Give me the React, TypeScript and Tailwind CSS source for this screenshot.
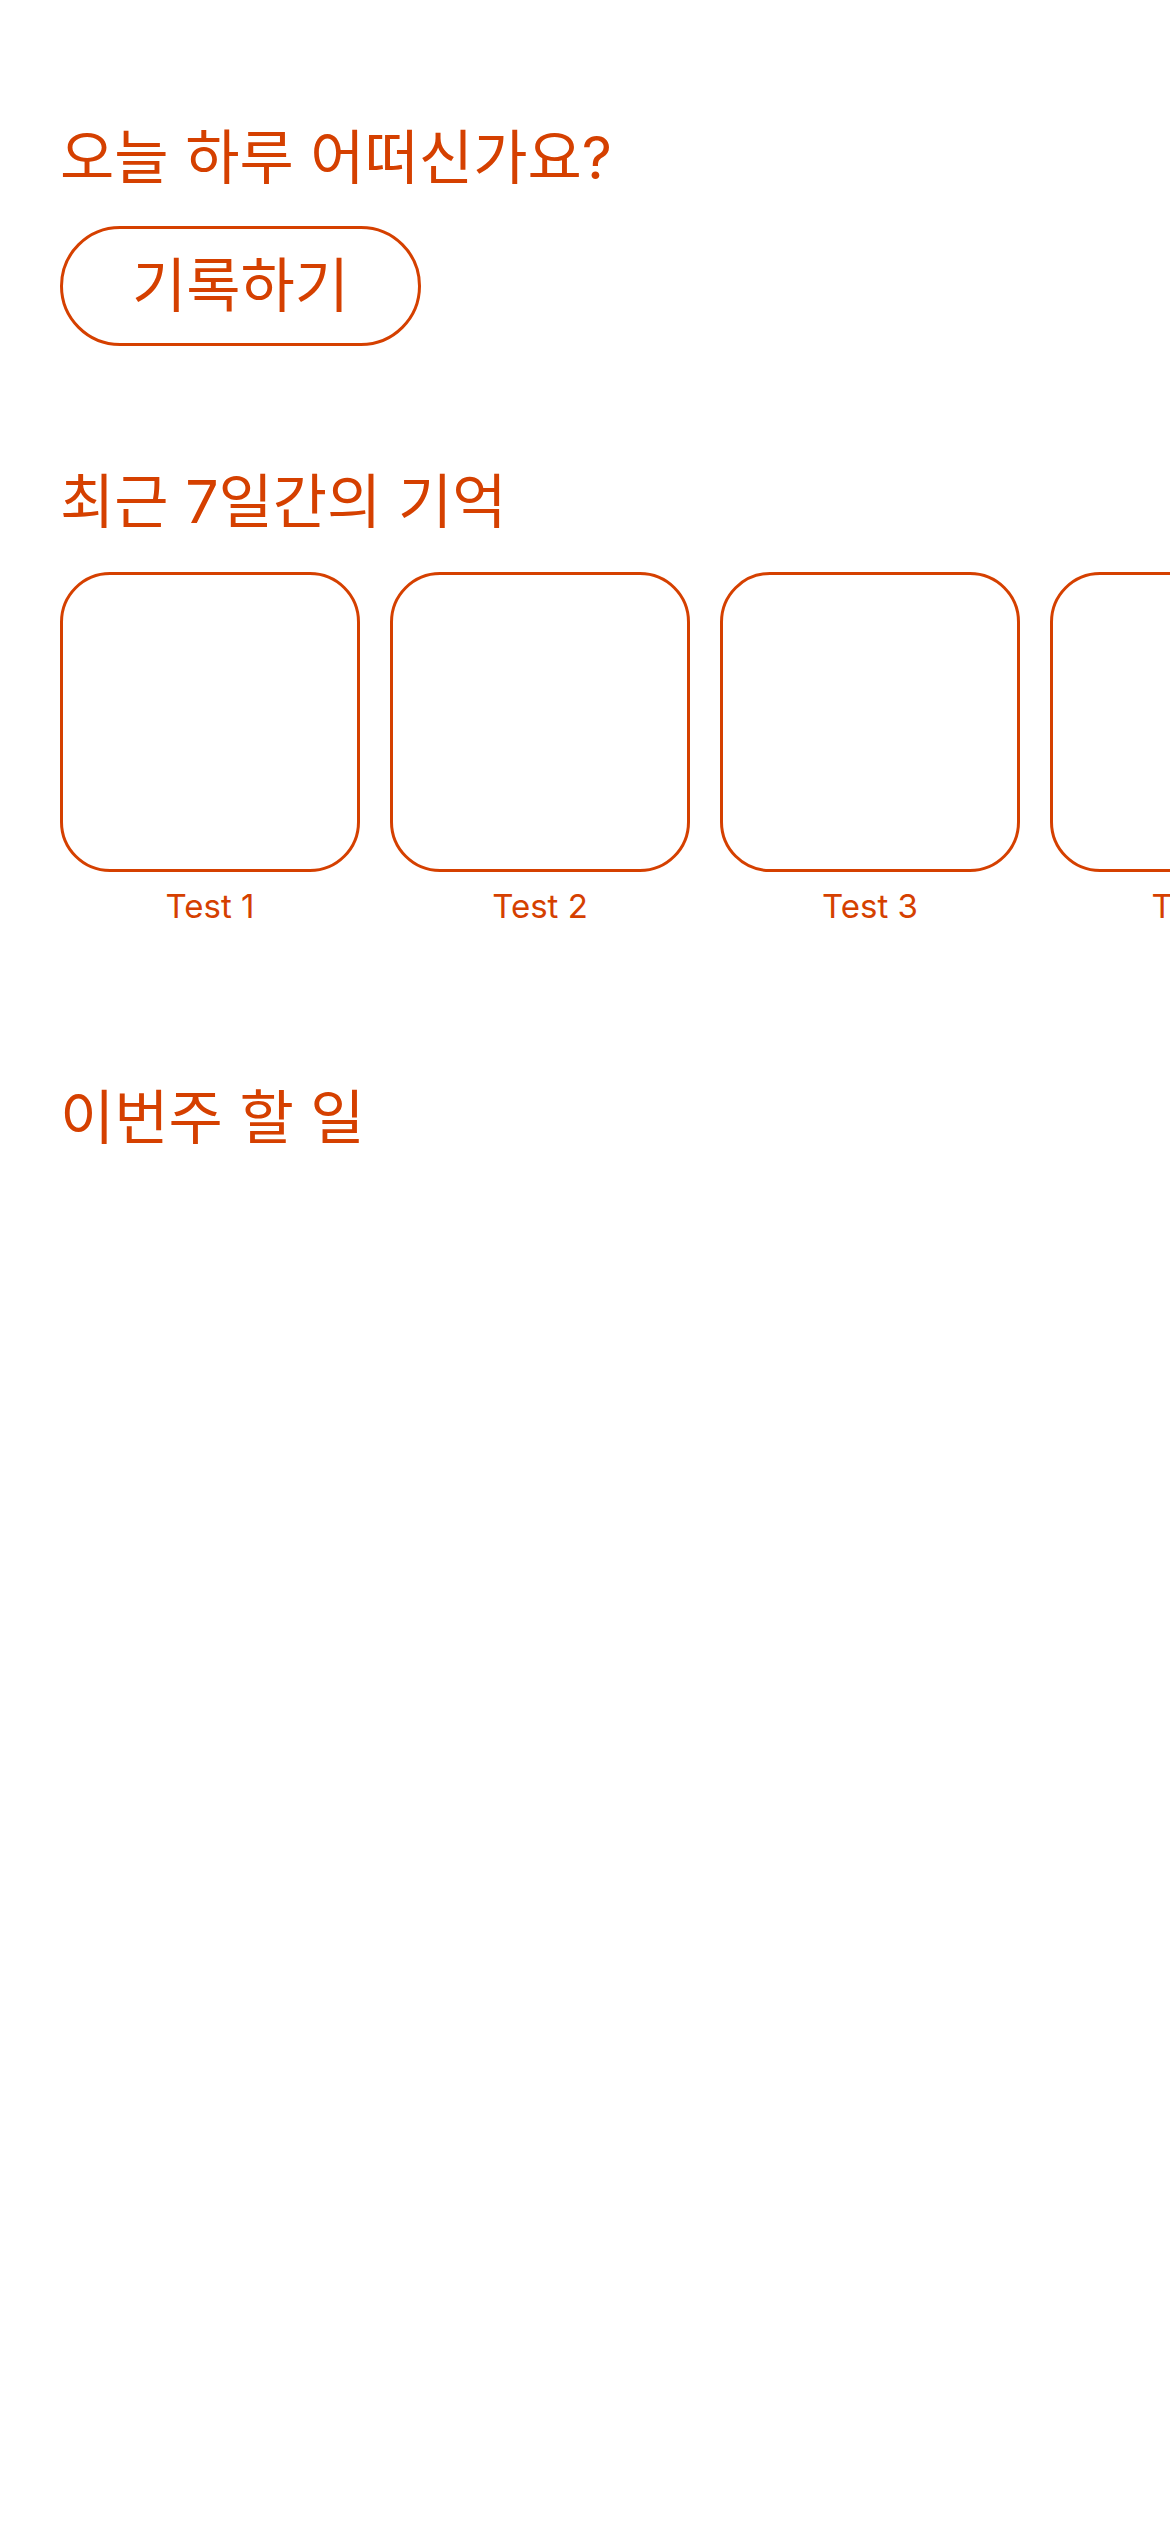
const days = Array.from({ length: 7 }, (_, i) => `Test ${i + 1}`);

export default function App() {
  return (
    <main className="min-h-screen overflow-hidden bg-white pt-[122px] pl-[60px] font-['Inter','Noto_Sans_CJK_KR',sans-serif] text-[#d54000]">
      <section>
        <h1 className="text-[59px] leading-[72px]">오늘 하루 어떠신가요?</h1>
        <button
          type="button"
          className="mt-[32px] flex h-[120px] items-center rounded-full border-3 border-[#d54000] px-[69px] text-[59px] leading-[72px]"
        >
          기록하기
        </button>
      </section>
      <section className="mt-[120px]">
        <h2 className="text-[59px] leading-[72px]">최근 7일간의 기억</h2>
        <ul className="mt-[34px] flex gap-[30px] overflow-x-auto [scrollbar-width:none]">
          {days.map((label) => (
            <li key={label} className="flex shrink-0 flex-col items-center gap-[14px]">
              <div className="size-[300px] rounded-[50px] border-3 border-[#d54000]" />
              <span className="text-[33px] leading-[40px]">{label}</span>
            </li>
          ))}
        </ul>
      </section>
      <section className="mt-[156px]">
        <h2 className="text-[59px] leading-[72px]">이번주 할 일</h2>
      </section>
    </main>
  );
}
